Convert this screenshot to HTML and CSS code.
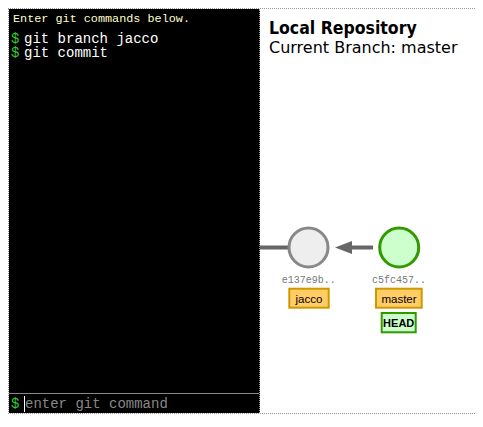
FILE: index.html
```html
<!DOCTYPE html>
<html lang="en">
<head>
  <meta charset="UTF-8">
  <title>Explain Git</title>
  <link rel="stylesheet" href="styles.css">
</head>
<body>
  <div class="workspace">
    <div class="control-box">
      <div class="log">
        <div class="info">Enter git commands below.</div>
        <div class="cmd"><span class="prompt">$</span>git branch jacco</div>
        <div class="cmd"><span class="prompt">$</span>git commit</div>
      </div>
      <div class="input-row">
        <span class="prompt">$</span>
        <input class="input" type="text" placeholder="enter git command">
      </div>
    </div>

    <div class="repo">
      <div class="repo-head">
        <div class="repo-title">Local Repository</div>
        <div>Current Branch: master</div>
      </div>

      <svg class="graph" width="223" height="404" viewBox="0 0 223 404">
        <line x1="0" y1="238.5" x2="29" y2="238.5" class="link"/>
        <line x1="113" y1="238.5" x2="90" y2="238.5" class="link"/>
        <polygon points="75,238.5 92,232 92,245" class="arrow"/>

        <circle cx="48.5" cy="238.5" r="19.5" class="commit"/>
        <circle cx="139.2" cy="238.5" r="19.5" class="commit checked-out"/>

        <text x="48.7" y="273.5" class="commit-id">e137e9b..</text>
        <text x="139" y="273.5" class="commit-id">c5fc457..</text>

        <rect x="29.3" y="279.7" width="39.4" height="19" class="branch-tag"/>
        <text x="49" y="293.5" class="tag-text">jacco</text>

        <rect x="116" y="279.7" width="45.7" height="19" class="branch-tag"/>
        <text x="139" y="293.5" class="tag-text">master</text>

        <rect x="121.7" y="304" width="34" height="19.3" class="head-tag"/>
        <text x="138.7" y="318" class="tag-text head">HEAD</text>
      </svg>
    </div>
  </div>
</body>
</html>
```

FILE: styles.css
```css
body {
  margin: 8px;
  overflow: hidden;
  background: #fff;
  color: #000;
  font-family: "DejaVu Sans", sans-serif;
}

.workspace {
  display: flex;
  width: 474px;
  height: 404px;
  border: 1px dotted #999;
  border-right: none;
}

.control-box {
  display: flex;
  flex-direction: column;
  width: 250px;
  flex-shrink: 0;
  background: #000;
  border-right: 1px dotted #999;
  font-family: "Liberation Mono", monospace;
}

.log {
  flex-grow: 1;
  padding: 3px 0 0 2px;
  color: #fff;
  font-size: 14px;
  line-height: 14px;
}

.info {
  padding-left: 2px;
  margin-bottom: 6px;
  color: #ffc;
  font-size: 11.8px;
  line-height: 14px;
}

.prompt {
  display: inline-block;
  width: 13px;
  color: #3c3;
}

.input-row {
  display: flex;
  align-items: center;
  height: 19px;
  padding-left: 2px;
  border-top: 1px solid #888;
  font-size: 14px;
}

.input {
  flex-grow: 1;
  min-width: 0;
  height: 16px;
  padding: 0;
  margin: 0;
  border: none;
  border-left: 1px solid #fff;
  outline: none;
  background: #000;
  color: #fff;
  font-family: "Liberation Mono", monospace;
  font-size: 14px;
}

.input::placeholder {
  color: #888;
}

.repo {
  position: relative;
  flex-grow: 1;
}

.repo-head {
  padding: 10px 0 0 9px;
  font-size: 16px;
  line-height: 19px;
}

.repo-title {
  font-family: "DejaVu Sans Condensed", "DejaVu Sans", sans-serif;
  font-weight: bold;
  font-size: 17.5px;
}

.graph {
  position: absolute;
  left: 0;
  top: 0;
}

.link {
  stroke: #666;
  stroke-width: 4;
}

.arrow {
  fill: #666;
}

.commit {
  fill: #eee;
  stroke: #888;
  stroke-width: 3;
}

.commit.checked-out {
  fill: #cfc;
  stroke: #339900;
}

.commit-id {
  font-family: "Liberation Mono", monospace;
  font-size: 10px;
  fill: #777;
  text-anchor: middle;
}

.branch-tag {
  fill: #ffcc66;
  stroke: #cc9900;
  stroke-width: 2;
}

.head-tag {
  fill: #cfc;
  stroke: #339900;
  stroke-width: 2;
}

.tag-text {
  font-family: "Liberation Sans", Arial, sans-serif;
  font-size: 11.5px;
  fill: #000;
  text-anchor: middle;
}

.tag-text.head {
  font-weight: bold;
  font-size: 11px;
}
```
